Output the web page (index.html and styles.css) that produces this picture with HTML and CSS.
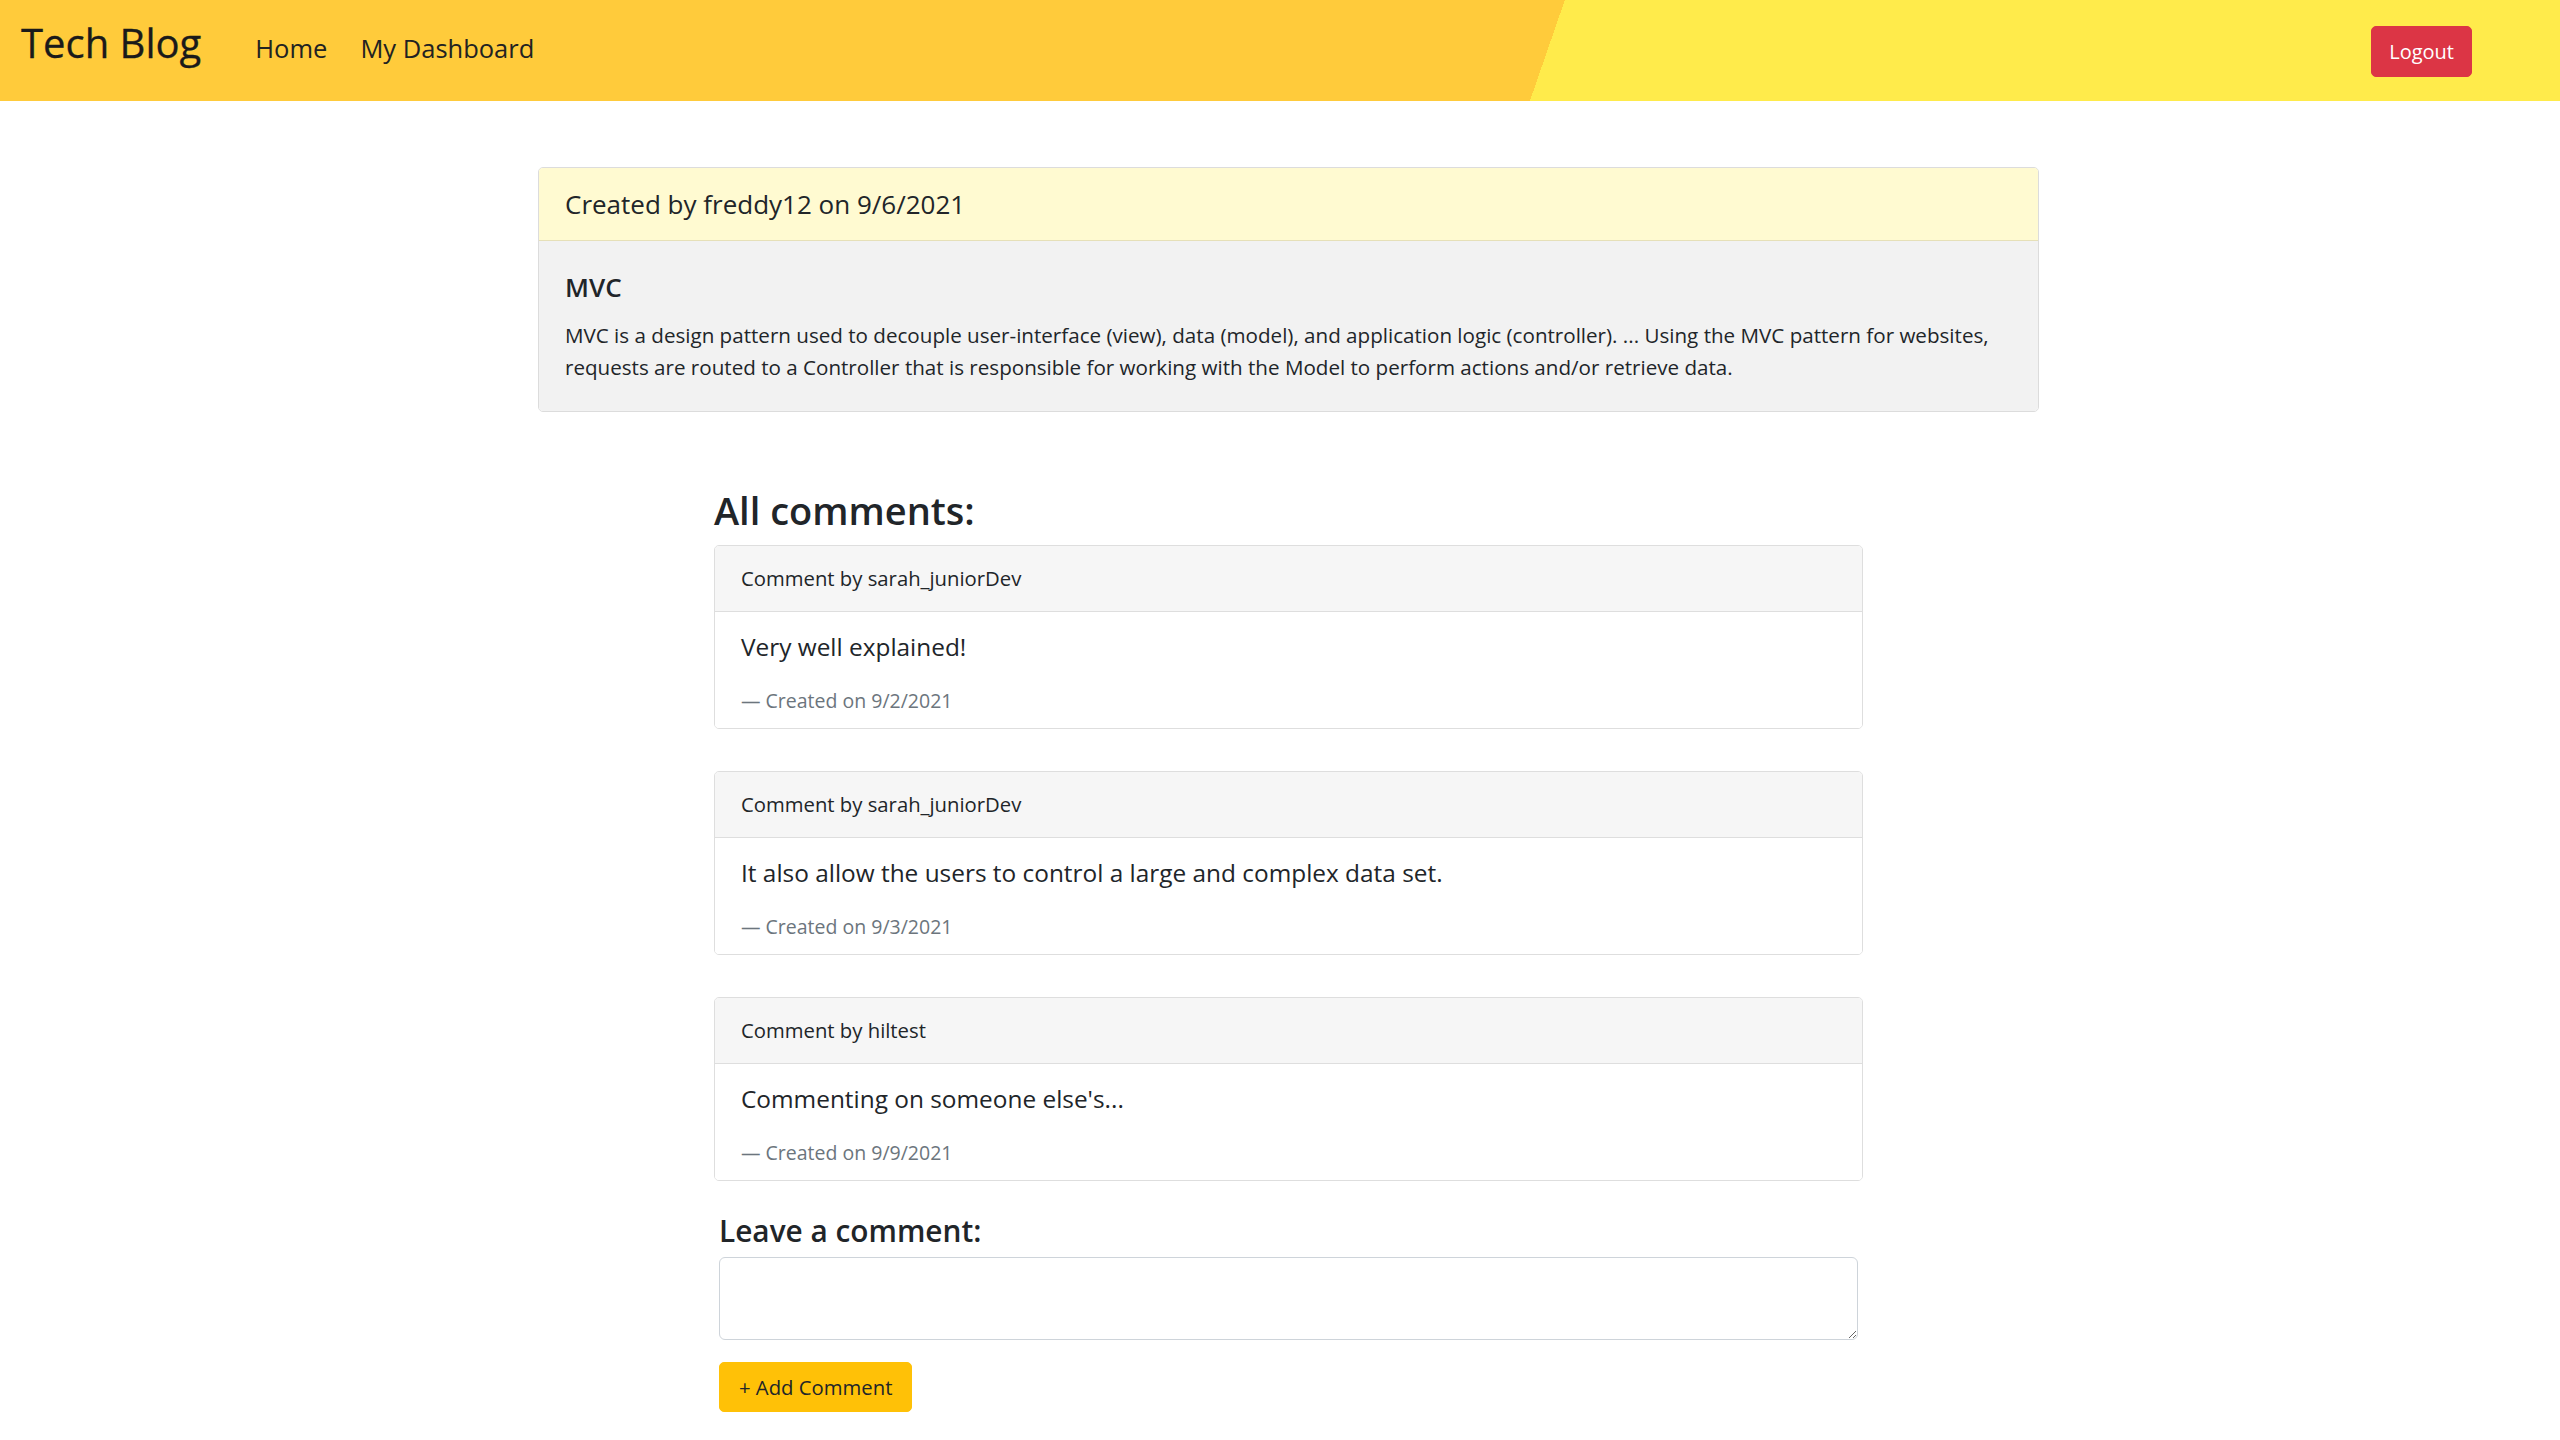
FILE: index.html
```html
<!DOCTYPE html>
<html lang="en">
<head>
<meta charset="utf-8">
<title>Tech Blog</title>
<link rel="stylesheet" href="styles.css">
</head>
<body>
<nav class="navbar">
  <div class="nav-left">
    <a class="brand" href="#">Tech Blog</a>
    <a class="nav-link" href="#">Home</a>
    <a class="nav-link" href="#">My Dashboard</a>
  </div>
  <button class="btn-logout" type="button">Logout</button>
</nav>

<main class="page">
  <article class="post-card">
    <header class="post-header">Created by freddy12 on 9/6/2021</header>
    <div class="post-body">
      <h5 class="post-title">MVC</h5>
      <p class="post-text">MVC is a design pattern used to decouple user-interface (view), data (model), and application logic (controller). ... Using the MVC pattern for websites, requests are routed to a Controller that is responsible for working with the Model to perform actions and/or retrieve data.</p>
    </div>
  </article>

  <section class="comments">
    <h3 class="comments-title">All comments:</h3>

    <div class="comment-card">
      <div class="comment-header">Comment by sarah_juniorDev</div>
      <div class="comment-body">
        <p class="comment-text">Very well explained!</p>
        <footer class="comment-footer">— Created on 9/2/2021</footer>
      </div>
    </div>

    <div class="comment-card">
      <div class="comment-header">Comment by sarah_juniorDev</div>
      <div class="comment-body">
        <p class="comment-text">It also allow the users to control a large and complex data set.</p>
        <footer class="comment-footer">— Created on 9/3/2021</footer>
      </div>
    </div>

    <div class="comment-card">
      <div class="comment-header">Comment by hiltest</div>
      <div class="comment-body">
        <p class="comment-text">Commenting on someone else's...</p>
        <footer class="comment-footer">— Created on 9/9/2021</footer>
      </div>
    </div>

    <form class="comment-form">
      <h4 class="form-title">Leave a comment:</h4>
      <textarea class="form-textarea"></textarea>
      <button class="btn-add" type="button">+ Add Comment</button>
    </form>
  </section>
</main>
</body>
</html>
```

FILE: styles.css
```css
* {
  box-sizing: border-box;
}

html, body {
  margin: 0;
  padding: 0;
  background: #ffffff;
}

body {
  font-family: "Open Sans", "Noto Sans", "Liberation Sans", sans-serif;
  color: #212529;
}

/* ---------- Navbar ---------- */
.navbar {
  height: 101px;
  display: flex;
  justify-content: space-between;
  align-items: flex-start;
  padding: 14px 88px 0 21px;
  background: linear-gradient(109.1deg, #ffcb3b 1478.7px, #ffeb4b 1478.7px);
}

.nav-left {
  display: flex;
  align-items: baseline;
}

.brand {
  font-size: 40px;
  line-height: 57px;
  color: #1a1a1a;
  text-decoration: none;
  margin-right: 54px;
  -webkit-text-stroke: 0.3px #1a1a1a;
}

.nav-link {
  font-size: 25.5px;
  color: #222222;
  text-decoration: none;
  margin-right: 33px;
}

.btn-logout {
  align-self: center;
  margin-top: -13px;
  font-family: inherit;
  font-size: 20px;
  line-height: 29px;
  padding: 10px 17px;
  color: #ffffff;
  background: #dc3545;
  border: 1px solid #dc3545;
  border-radius: 5px;
}

/* ---------- Page ---------- */
.page {
  max-width: 1518px;
  margin: 66px auto 0;
  padding-left: 17px;
}

/* ---------- Post card ---------- */
.post-card {
  border: 1px solid #dcdcdc;
  border-radius: 5px;
  overflow: hidden;
}

.post-header {
  background: #fffad1;
  border-bottom: 1px solid #e6e0b8;
  font-size: 26px;
  line-height: 36px;
  padding: 18px 26px;
}

.post-body {
  background: #f2f2f2;
  padding: 31px 20px 28px 26px;
}

.post-title {
  margin: 0 0 16px;
  font-size: 26px;
  line-height: 31px;
  font-weight: 600;
}

.post-text {
  margin: 0;
  font-size: 20.6px;
  line-height: 32px;
}

/* ---------- Comments ---------- */
.comments {
  width: 1149px;
  margin: 75px auto 0;
}

.comments-title {
  margin: 0 0 12px;
  font-size: 38px;
  line-height: 46px;
  font-weight: 600;
}

.comment-card {
  border: 1px solid #dedede;
  border-radius: 5px;
  margin-bottom: 42px;
  overflow: hidden;
}

.comment-card:last-of-type {
  margin-bottom: 32px;
}

.comment-header {
  background: #f6f6f6;
  border-bottom: 1px solid #dedede;
  font-size: 20.3px;
  line-height: 30px;
  padding: 17px 26px 18px;
}

.comment-body {
  background: #ffffff;
  padding: 16px 26px 12px;
}

.comment-text {
  margin: 0 0 21px;
  font-size: 24.4px;
  line-height: 37px;
}

.comment-footer {
  font-size: 19.5px;
  line-height: 30px;
  color: #6c757d;
}

/* ---------- Form ---------- */
.comment-form {
  padding: 0 5px;
}

.form-title {
  margin: 0 0 9px;
  font-size: 29.8px;
  line-height: 35px;
  font-weight: 600;
}

.form-textarea {
  display: block;
  width: 100%;
  height: 83px;
  border: 1px solid #ced4da;
  border-radius: 6px;
  font-family: inherit;
  font-size: 20px;
  margin: 0 0 22px;
}

.btn-add {
  font-family: inherit;
  font-size: 20.3px;
  line-height: 30px;
  padding: 9px 19px;
  color: #212529;
  background: #ffc107;
  border: 1px solid #ffc107;
  border-radius: 5px;
}
```
